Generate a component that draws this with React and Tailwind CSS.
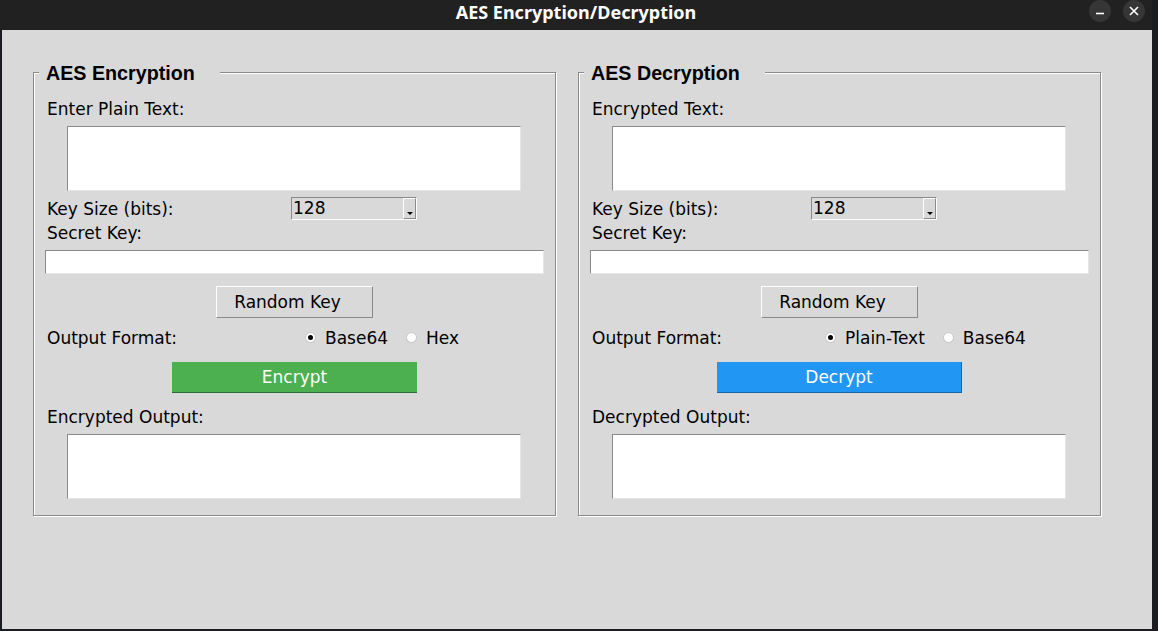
import React from 'react';

const body = "font-['DejaVu_Sans',sans-serif] text-[17px] leading-[24px] text-black";

const Label = ({ children, className = "" }) => (
  <div className={`h-[24px] pl-[13px] pt-[1px] whitespace-nowrap ${className}`}>{children}</div>
);

const TextBox = () => (
  <div className="ml-[33px] w-[454px] h-[65px] bg-white border border-t-[#8a8a8a] border-l-[#8a8a8a] border-b-[#e6e6e6] border-r-[#e6e6e6]" />
);

const Combo = () => (
  <div className="w-[126px] h-[23px] flex border border-t-[#8a8a8a] border-l-[#8a8a8a] border-b-white border-r-white">
    <span className="flex-1 pl-[1px] leading-[21px]">128</span>
    <div className="w-[13px] h-full flex items-end justify-center pb-[3px] border border-t-white border-l-white border-b-[#8a8a8a] border-r-[#8a8a8a]">
      <svg width="6" height="3" viewBox="0 0 6 3"><path d="M0 0h6L3 3z" fill="#000" /></svg>
    </div>
  </div>
);

const Radio = ({ checked, label }) => (
  <div className="flex items-center gap-[9px]">
    <span className="w-[11px] h-[11px] rounded-full bg-white border border-[#c4c4c4] flex items-center justify-center">
      {checked && <span className="w-[5px] h-[5px] rounded-full bg-black" />}
    </span>
    <span>{label}</span>
  </div>
);

function Panel({ title, first, last, comboGap, radioGap, options, action, actionClass }) {
  return (
    <div className="relative w-[523px] h-[444px] border border-[#8a8a8a] shadow-[inset_1px_1px_0_#fff,1px_1px_0_#fff]">
      <div className="absolute left-[5px] -top-[11px] w-[181px] h-[22px] bg-[#d9d9d9] pl-[7px] font-['Liberation_Sans',Arial,sans-serif] font-bold text-[19.7px] leading-[22px] text-black">
        {title}
      </div>
      <div className={`flex flex-col pt-[23px] ${body}`}>
        <Label>{first}</Label>
        <div className="mt-[6px]"><TextBox /></div>
        <div className="mt-[5px] h-[24px] flex items-center pl-[13px] pt-[1px]">
          <span className="whitespace-nowrap" style={{ width: comboGap }}>Key Size (bits):</span>
          <Combo />
        </div>
        <Label>Secret Key:</Label>
        <div className="mt-[6px] ml-[11px] w-[499px] h-[24px] bg-white border border-t-[#8a8a8a] border-l-[#8a8a8a] border-b-[#e6e6e6] border-r-[#e6e6e6]" />
        <button className="mt-[12px] ml-[182px] w-[157px] h-[32px] pr-[14px] bg-[#d9d9d9] border border-t-white border-l-white border-b-[#8a8a8a] border-r-[#8a8a8a] text-center">
          Random Key
        </button>
        <div className="mt-[7px] h-[24px] flex items-center pl-[13px] pt-[1px]">
          <span className="whitespace-nowrap" style={{ width: radioGap }}>Output Format:</span>
          <div className="flex items-center gap-[18px]">
            <Radio checked label={options[0]} />
            <Radio label={options[1]} />
          </div>
        </div>
        <button className={`mt-[13px] ml-[138px] w-[245px] h-[31px] text-white text-center leading-[29px] ${actionClass}`}>
          {action}
        </button>
        <Label className="mt-[11px]">{last}</Label>
        <div className="mt-[6px]"><TextBox /></div>
      </div>
    </div>
  );
}

export default function App() {
  return (
    <div className="w-[1158px] h-[631px] bg-[#1b1c22] overflow-hidden">
      <div className="w-[1152px] h-[629px] flex flex-col">
        <div className="relative h-[30px] bg-[#212121] flex justify-center">
          <span className="font-['Noto_Sans',sans-serif] font-bold text-[18px] leading-[24px] text-white">AES Encryption/Decryption</span>
          <div className="absolute right-[41px] top-[0px] w-[22px] h-[22px] rounded-full bg-[#363636] flex items-center justify-center">
            <svg width="10" height="10" viewBox="0 0 10 10"><path d="M1 7.5h8" stroke="#fff" strokeWidth="1.6" /></svg>
          </div>
          <div className="absolute right-[7px] top-[0px] w-[22px] h-[22px] rounded-full bg-[#363636] flex items-center justify-center">
            <svg width="10" height="10" viewBox="0 0 10 10"><path d="M1 1l8 8M9 1l-8 8" stroke="#fff" strokeWidth="1.6" /></svg>
          </div>
        </div>
        <div className="ml-[2px] flex-1 bg-[#d9d9d9] pl-[31px] pt-[42px] flex gap-[22px]">
          <Panel
            title="AES Encryption"
            first="Enter Plain Text:"
            last="Encrypted Output:"
            comboGap={244}
            radioGap={258}
            options={["Base64", "Hex"]}
            action="Encrypt"
            actionClass="bg-[#4caf50] border-b border-b-[#2e6b31]"
          />
          <Panel
            title="AES Decryption"
            first="Encrypted Text:"
            last="Decrypted Output:"
            comboGap={219}
            radioGap={233}
            options={["Plain-Text", "Base64"]}
            action="Decrypt"
            actionClass="bg-[#2196f3] border-b border-r border-[#1565a8]"
          />
        </div>
      </div>
    </div>
  );
}
